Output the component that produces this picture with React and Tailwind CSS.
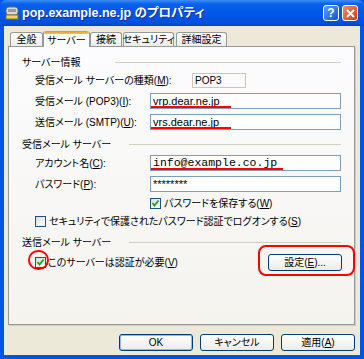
import React from "react";

const FONT = "[font-family:'Liberation_Sans','Noto_Sans_CJK_JP',sans-serif] [font-feature-settings:'palt'] whitespace-nowrap";

const Check = ({ checked }) => (
  <span className="w-[11px] h-[11px] border border-[#1C5180] bg-gradient-to-br from-[#DCDCD7] to-white flex items-center justify-center shrink-0">
    {checked && (
      <svg width="9" height="9" viewBox="0 0 9 9">
        <path d="M1.5 4 L3.5 6.5 L7.5 1.5" stroke="#21A121" strokeWidth="1.8" fill="none" />
      </svg>
    )}
  </span>
);

const Field = ({ children, mono, mark }) => (
  <div className="relative w-[191px] h-[16px] border border-[#7F9DB9] bg-white flex items-center pl-[2px] shrink-0">
    <span className={mono ? "[font-family:'Liberation_Mono',monospace] text-[11.5px] leading-none" : "text-[11px] leading-none"}>
      {children}
    </span>
    {mark && <span className={"absolute left-0 bottom-[0px] h-[2px] bg-[#FF0000] " + mark} />}
  </div>
);

const Row = ({ label, children, w = "w-[115px]" }) => (
  <div className="flex items-center pl-[13px] text-[10px]">
    <span className={"shrink-0 " + w}>{label}</span>
    {children}
  </div>
);

const Section = ({ label, line }) => (
  <div className="flex items-center h-[14px] text-[10px]">
    <span>{label}</span>
    <span className={"ml-auto h-px bg-[#D0D0BF] " + line} />
  </div>
);

const Btn = ({ children, primary }) => (
  <button
    className={
      "w-[74px] h-[17px] rounded-[3px] border border-[#003C74] bg-gradient-to-b from-white to-[#ECEBE6] text-[10px] leading-none flex items-center justify-center " +
      (primary ? "shadow-[inset_0_0_0_1px_#98B8EA]" : "")
    }
  >
    {children}
  </button>
);

const Tab = ({ w, children }) => (
  <div className={"h-[14px] border border-b-0 border-[#919B9C] rounded-t-[3px] bg-gradient-to-b from-white to-[#ECEBE6] flex items-center justify-center " + w}>
    {children}
  </div>
);

export default function App() {
  return (
    <div className={"w-[364px] h-[359px] bg-[#0055E5] flex flex-col text-black " + FONT}>
      {/* title bar */}
      <div className="h-[26px] shrink-0 flex items-center pl-[5px] pr-[6px] bg-[linear-gradient(to_bottom,#3D8EF6_0%,#0A62EB_15%,#0056E6_50%,#0052DF_85%,#0044C8_100%)] rounded-t-[6px]">
        <svg width="14" height="14" viewBox="0 0 14 14" className="shrink-0">
          <rect x="1" y="1" width="12" height="8" rx="3" fill="#D8D8D8" stroke="#6E6E6E" />
          <rect x="3" y="3" width="8" height="3" fill="#9A9A9A" />
          <rect x="1" y="9" width="12" height="4" fill="#F3D55B" stroke="#8A7428" />
        </svg>
        <span className="ml-[3px] text-white font-bold text-[12.5px] leading-none [text-shadow:1px_1px_#0F2E9B]">
          pop.example.ne.jp のプロパティ
        </span>
        <div className="ml-auto flex gap-[3px]">
          <div className="w-[16px] h-[16px] rounded-[3px] border border-white bg-gradient-to-br from-[#5C9BFF] to-[#1553D8] text-white font-bold text-[12px] leading-none flex items-center justify-center">
            ?
          </div>
          <div className="w-[16px] h-[16px] rounded-[3px] border border-white bg-gradient-to-br from-[#F08C6A] to-[#C73A12] flex items-center justify-center">
            <svg width="9" height="9" viewBox="0 0 9 9">
              <path d="M1 1 L8 8 M8 1 L1 8" stroke="white" strokeWidth="1.8" />
            </svg>
          </div>
        </div>
      </div>

      {/* body */}
      <div className="flex-1 mx-[4px] mb-[4px] bg-[#ECE9D8] flex flex-col pl-[4px] pr-[5px] pt-[4px]">
        {/* tabs */}
        <div className="flex items-end h-[16px] pl-[2px] text-[10px] leading-none">
          <Tab w="w-[33px]">全般</Tab>
          <div className="w-[47px] h-[16px] -mb-px relative z-10 border-x border-[#919B9C] rounded-t-[3px] bg-[#FCFCFE] flex flex-col">
            <span className="h-[3px] rounded-t-[3px] bg-gradient-to-b from-[#E68B2C] to-[#FFC73C]" />
            <span className="flex-1 flex items-center justify-center">サーバー</span>
          </div>
          <Tab w="w-[32px]">接続</Tab>
          <Tab w="w-[51px] ml-[1px]">セキュリティ</Tab>
          <Tab w="w-[51px] ml-[2px]">詳細設定</Tab>
        </div>

        {/* panel */}
        <div className="h-[279px] shrink-0 border border-[#919B9C] bg-gradient-to-b from-[#FCFCFE] to-[#F4F3EE] shadow-[1px_1px_0_#D0CEBF] flex flex-col pl-[13px] pr-[13px] pt-[8px]">
          <Section label="サーバー情報" line="w-[226px]" />
          <div className="mt-[4px]">
            <Row w="w-[157px]" label={<>受信メール サーバーの種類(<u>M</u>):</>}>
              <div className="w-[54px] h-[15px] border border-[#C9C7BA] flex items-center pl-[2px] leading-none">POP3</div>
            </Row>
          </div>
          <div className="mt-[5px]">
            <Row label={<>受信メール (POP3)(<u>I</u>):</>}>
              <Field mark="w-[80px]">vrp.dear.ne.jp</Field>
            </Row>
          </div>
          <div className="mt-[5px]">
            <Row label={<>送信メール (SMTP)(<u>U</u>):</>}>
              <Field mark="w-[80px]">vrs.dear.ne.jp</Field>
            </Row>
          </div>

          <div className="mt-[7px]">
            <Section label="受信メール サーバー" line="w-[212px]" />
          </div>
          <div className="mt-[4px]">
            <Row label={<>アカウント名(<u>C</u>):</>}>
              <Field mono mark="w-[132px]">info@example.co.jp</Field>
            </Row>
          </div>
          <div className="mt-[5px]">
            <Row label={<>パスワード(<u>P</u>):</>}>
              <Field>********</Field>
            </Row>
          </div>
          <div className="mt-[5px] h-[13px] flex items-center gap-[3px] pl-[128px] text-[10px]">
            <Check checked />
            <span>パスワードを保存する(<u>W</u>)</span>
          </div>
          <div className="mt-[5px] h-[13px] flex items-center gap-[3px] pl-[13px] text-[10px]">
            <Check />
            <span>セキュリティで保護されたパスワード認証でログオンする(<u>S</u>)</span>
          </div>

          <div className="mt-[7px]">
            <Section label="送信メール サーバー" line="w-[212px]" />
          </div>
          <div className="mt-[5px] h-[17px] flex items-center pl-[13px] text-[10px]">
            <div className="relative flex items-center gap-[2px]">
              <Check checked />
              <span>このサーバーは認証が必要(<u>V</u>)</span>
              <span className="absolute -left-[7px] -top-[5px] w-[21px] h-[20px] rounded-full border-[2.5px] border-[#FF0000]" />
            </div>
            <div className="relative ml-auto mr-[-1px]">
              <Btn>設定(<u>E</u>)...</Btn>
              <span className="absolute -left-[10px] -top-[9px] w-[97px] h-[31px] rounded-[8px] border-[2px] border-[#FF0000]" />
            </div>
          </div>
        </div>

        {/* buttons */}
        <div className="mt-[9px] flex justify-end gap-[7px]">
          <Btn primary>OK</Btn>
          <Btn>キャンセル</Btn>
          <Btn>適用(<u>A</u>)</Btn>
        </div>
      </div>
    </div>
  );
}
